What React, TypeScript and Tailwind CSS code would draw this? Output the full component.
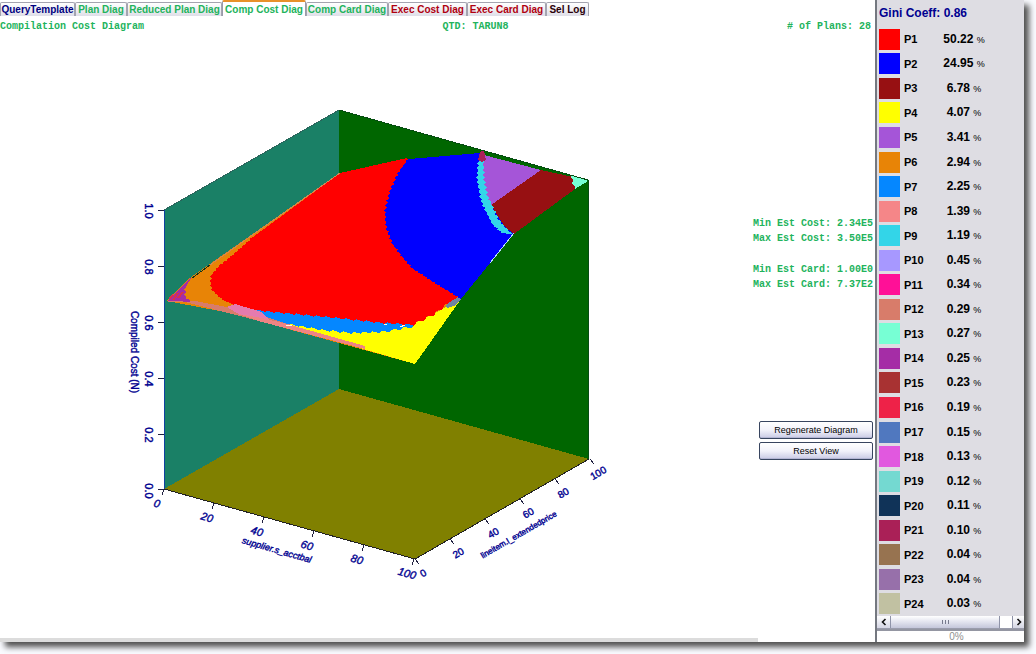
import React from "react";

type Point = [number, number];

const tabs = [
  { label: "QueryTemplate", color: "text-[#000080]", width: "w-[75px]" },
  { label: "Plan Diag", color: "text-[#22b35c]", width: "w-[52px]" },
  { label: "Reduced Plan Diag", color: "text-[#22b35c]", width: "w-[95px]" },
  { label: "Comp Cost Diag", color: "text-[#22b35c]", width: "w-[84px]", active: true },
  { label: "Comp Card Diag", color: "text-[#22b35c]", width: "w-[82px]" },
  { label: "Exec Cost Diag", color: "text-[#b00010]", width: "w-[79px]" },
  { label: "Exec Card Diag", color: "text-[#b00010]", width: "w-[79px]" },
  { label: "Sel Log", color: "text-[#2b0008]", width: "w-[43px]" },
];

const plans = [
  { value: "50.22", color: "bg-[#ff0000]" },
  { value: "24.95", color: "bg-[#0000ff]" },
  { value: "6.78", color: "bg-[#971012]" },
  { value: "4.07", color: "bg-[#ffff00]" },
  { value: "3.41", color: "bg-[#a555d8]" },
  { value: "2.94", color: "bg-[#e88406]" },
  { value: "2.25", color: "bg-[#0587ff]" },
  { value: "1.39", color: "bg-[#f58688]" },
  { value: "1.19", color: "bg-[#33d5e8]" },
  { value: "0.45", color: "bg-[#a798ff]" },
  { value: "0.34", color: "bg-[#ff1097]" },
  { value: "0.29", color: "bg-[#d87c6a]" },
  { value: "0.27", color: "bg-[#77ffd4]" },
  { value: "0.25", color: "bg-[#a52da6]" },
  { value: "0.23", color: "bg-[#a83232]" },
  { value: "0.19", color: "bg-[#ee2248]" },
  { value: "0.15", color: "bg-[#5078bf]" },
  { value: "0.13", color: "bg-[#e158df]" },
  { value: "0.12", color: "bg-[#74d9d1]" },
  { value: "0.11", color: "bg-[#103358]" },
  { value: "0.10", color: "bg-[#aa2057]" },
  { value: "0.04", color: "bg-[#977350]" },
  { value: "0.04", color: "bg-[#9770aa]" },
  { value: "0.03", color: "bg-[#c1c1a2]" },
];

// Splits a curve into short saw-toothed steps, like the cells of a sampled grid.
function jag(points: Point[], dx: number, dy: number, step = 2.5): Point[] {
  const out: Point[] = [];
  let n = 0;
  for (let i = 0; i < points.length - 1; i++) {
    const [x1, y1] = points[i];
    const [x2, y2] = points[i + 1];
    const steps = Math.max(1, Math.round(Math.hypot(x2 - x1, y2 - y1) / step));
    for (let s = 0; s < steps; s++) {
      const sign = n++ % 2 === 0 ? 1 : -1;
      out.push([x1 + ((x2 - x1) * s) / steps + sign * dx, y1 + ((y2 - y1) * s) / steps + sign * dy]);
    }
  }
  out.push(points[points.length - 1]);
  return out;
}

const toPoints = (p: Point[]) => p.map((q) => q.join(",")).join(" ");

const redLeft: Point[] = [[253, 237], [245, 244], [235, 253], [220, 265], [212, 274], [210, 281], [212, 290], [223, 300], [237, 306], [245, 309]];
const redBottom: Point[] = [[245, 309], [283, 313], [337, 318], [383, 323], [413, 325], [433, 315], [450, 302], [460, 298]];
const blueLeft: Point[] = [[408, 159], [398, 173], [390, 191], [385, 210], [386, 227], [392, 243], [403, 258], [413, 269], [430, 280], [443, 288], [461, 299]];
const cyanLeft: Point[] = [[478, 161], [477, 180], [480, 197], [485, 210], [493, 225], [502, 233], [512, 234]];
const cyanRight: Point[] = [[511, 233], [505, 227], [498, 219], [493, 207], [488, 197], [484, 180], [483, 160]];
const skyBottom: Point[] = [[409, 327], [400, 329], [383, 332], [350, 333], [323, 330], [287, 324]];

const regions: { fill: string; points: Point[] }[] = [
  { fill: "#e88406", points: [[167, 301], [187, 280], [321, 186], [340, 173], [407, 158], [461, 299], [415, 364], [230, 313]] },
  { fill: "#a52da6", points: [[167, 301], [191, 278], ...jag([[185, 287], [185, 297], [193, 303]], 1, 0)] },
  { fill: "#d87c6a", points: [[185, 302], [195, 301], [227, 307], [240, 309], [365, 346], [365, 349], [240, 316]] },
  { fill: "#ffff00", points: [[283, 322], [413, 324], [433, 314], [461, 299], [415, 364], [363, 349]] },
  { fill: "#0587ff", points: [[244, 309], [300, 310], [413, 320], [413, 327], ...jag(skyBottom, 1, 1, 5)] },
  { fill: "#ff0000", points: [[340, 173], [407, 158], [461, 299], ...jag([...redBottom].reverse(), 1, 1, 5), ...jag([...redLeft].reverse(), 1, 0), [321, 187]] },
  { fill: "#e57bae", points: [[227, 307], [235, 304], [262, 312], [270, 321], [240, 315]] },
  { fill: "#ee8484", points: [[238, 314], [262, 318], [287, 324], [365, 346], [365, 349], [262, 322]] },
  { fill: "#6f84a4", points: [[446, 305], [450, 302], [458, 297], [461, 299], [456, 305], [447, 308]] },
  { fill: "#0000ff", points: [...jag(blueLeft, 1, 0), [490, 263], [513, 234], [500, 190], [480, 153]] },
  { fill: "#971012", points: [[541, 170], [573, 177], [575, 189], [514, 234], [505, 227], [490, 204]] },
  { fill: "#a555d8", points: [[480, 154], [541, 170], [491, 205], [484, 190]] },
  { fill: "#33d5e8", points: [...jag(cyanLeft, 1, 0), ...jag(cyanRight, 1, 0)] },
  { fill: "#aa2057", points: [[480, 152], [484, 150], [486, 160], [482, 162], [478, 160]] },
  { fill: "#77ffd4", points: [[570, 175], [588, 181], [575, 189], [575, 186], [572, 184], [573, 180]] },
];

const vertical = ["1.0", "0.8", "0.6", "0.4", "0.2", "0.0"];
const horizontal = ["0", "20", "40", "60", "80", "100"];

function CostDiagram() {
  return (
    <svg
      viewBox="0 36 757 602"
      className="min-h-0 min-w-0 flex-1 self-stretch font-['Liberation_Sans_Narrow','Liberation_Sans',sans-serif]"
      role="img"
      aria-label="Compilation cost surface"
    >
      <g shapeRendering="crispEdges">
        <polygon points="164,210 339,110 339,389 164,489" fill="#1a8066" />
        <polygon points="339,110 589,180 589,459 339,389" fill="#006600" />
        <polygon points="164,489 339,389 589,459 415,559" fill="#808000" />
        {regions.map((r, i) => (
          <polygon key={i} points={toPoints(r.points)} fill={r.fill} />
        ))}
        <path d="M169 299l4-4M173 300l5-7M178 298l5-6" stroke="#d9304f" strokeWidth="2" />
        <path d="M168 301h15" stroke="#d87c6a" />
        <path d="M192 278l18-13" stroke="#10331c" />
        <path d="M210 265L340 173" stroke="#d68550" />
        <path d="M490 263L514 233" stroke="#b6dfff" />
        <path d="M286 325h6M384 324h3M400 327l5-2" stroke="#fffce0" />
        <path d="M339 110L588 180V459" stroke="#064c12" fill="none" />
        <path d="M339 110L164 210" stroke="#2b655c" fill="none" />
        <path d="M164 210V489" stroke="#1040a0" />
        <path d="M164 489L415 559L589 459" stroke="#222222" fill="none" />
        {horizontal.map((_, i) => (
          <path
            key={i}
            d={`M158 ${210 + 56 * i - (i === 5 ? 1 : 0)}h6M${164 + 50 * i} ${489 + 14 * i}l-2 6M${415 + 35 * i} ${559 - 20 * i}l4 5`}
            stroke="#202040"
          />
        ))}
      </g>
      <g fill="#000090" stroke="#000090" strokeWidth="0.4" textAnchor="middle" fontSize="11">
        {vertical.map((t, i) => (
          <text key={t} transform={`translate(145 ${211 + 56 * i}) rotate(90)`}>{t}</text>
        ))}
        <g fontStyle="italic">
          {horizontal.map((t, i) => (
            <text key={t} transform={`translate(${156 + 50 * i} ${507 + 14 * i}) rotate(16)`}>{t}</text>
          ))}
          <text transform="translate(276 553) rotate(16)" fontSize="9">supplier.s_acctbal</text>
        </g>
        <text transform="translate(131 352) rotate(90)" fontSize="10">Compiled Cost (N)</text>
        {horizontal.map((t, i) => (
          <text key={t} fontSize="10" transform={`translate(${425 + 35 * i} ${576 - 20 * i}) rotate(-30)`}>{t}</text>
        ))}
        <text fontSize="8" transform="translate(520 537) rotate(-30)">lineitem.l_extendedprice</text>
      </g>
    </svg>
  );
}

const buttonClass =
  "h-[18px] w-full rounded-[2px] border border-[#38455f] bg-linear-to-b from-white via-[#f2f2fa] to-[#c9cae4] text-[9px] leading-[16px] text-black shadow-[inset_0_-1px_0_#b4b6d4]";

export default function App() {
  return (
    <div className="flex min-h-screen bg-[#fafbff] pr-3 pb-3 font-['Liberation_Sans',Arial,sans-serif]">
      <div className="flex min-w-0 flex-1 bg-white shadow-[5px_5px_6px_0_#505050]">
        <main className="flex min-w-0 flex-1 flex-col">
          <nav role="tablist" className="flex h-4 items-end">
            {tabs.map((t) => (
              <button
                key={t.label}
                role="tab"
                aria-selected={!!t.active}
                className={`${t.width} ${t.color} shrink-0 rounded-t-[2px] border-x border-t text-center text-[10px] font-bold whitespace-nowrap ${
                  t.active
                    ? "h-4 border-x-[#9a9aa8] border-t-2 border-t-[#e8912a] bg-white leading-[13px]"
                    : "h-[14px] border-[#a4a4b0] bg-linear-to-b from-white to-[#dfdfe8] leading-[14px]"
                }`}
              >
                {t.label}
              </button>
            ))}
          </nav>
          <header className="grid h-5 grid-cols-3 items-center pr-1 font-['Liberation_Mono',monospace] text-[10px] font-bold text-[#22b35c]">
            <h1>Compilation Cost Diagram</h1>
            <p className="pl-20 text-center">QTD: TARUN8</p>
            <p className="text-right"># of Plans: 28</p>
          </header>
          <div className="flex min-h-0 flex-1">
            <CostDiagram />
            <aside className="flex w-[118px] flex-col items-end pt-[180px] pr-[2px] pb-3">
              <div className="font-['Liberation_Mono',monospace] text-[10px] leading-[15px] font-bold whitespace-nowrap text-[#22b35c]">
                <p>Min Est Cost: 2.34E5</p>
                <p>Max Est Cost: 3.50E5</p>
                <p className="mt-4">Min Est Card: 1.00E0</p>
                <p>Max Est Card: 7.37E2</p>
              </div>
              <div className="mt-[129px] flex w-[114px] flex-col gap-[3px]">
                <button className={buttonClass}>Regenerate Diagram</button>
                <button className={buttonClass}>Reset View</button>
              </div>
            </aside>
          </div>
          <div className="mr-[117px] h-1 bg-[#dcdcdc]" />
        </main>
        <aside className="flex w-[149px] shrink-0 flex-col border-l-2 border-[#747880] bg-[#dedde3]">
          <h2 className="h-[27px] pl-[2px] text-[12px] leading-[26px] font-bold text-[#000090]">Gini Coeff: 0.86</h2>
          <table className="flex flex-1 text-black">
            <tbody className="flex flex-1 flex-col">
              {plans.map((p, i) => (
                <tr key={i} className="flex flex-1 items-center">
                  <td className={`${p.color} ml-[2px] h-[21px] w-[21px]`} />
                  <th scope="row" className="w-[26px] pl-1 text-left text-[11px] leading-4 font-bold">P{i + 1}</th>
                  <td className="w-[76px] text-center text-[12px] leading-4 font-bold">
                    {p.value} <span className="text-[9px] font-normal">%</span>
                  </td>
                </tr>
              ))}
            </tbody>
          </table>
          <div className="flex h-[13px] border-b border-[#9a9cac] bg-white">
            <button aria-label="Scroll left" className="flex w-[14px] items-center justify-center border-r border-[#8f93a8] bg-linear-to-b from-white to-[#d5d6e4]">
              <svg viewBox="0 0 8 8" className="h-2 w-2"><path d="M5.5 1L2.5 4L5.5 7" fill="none" stroke="#111" strokeWidth="1.6" /></svg>
            </button>
            <div className="flex flex-1 items-center justify-center gap-[2px] border-r border-[#8f93a8] bg-linear-to-b from-white via-[#e2e3ee] to-[#c4c6da]">
              <span className="h-1 w-px bg-[#777a8c]" />
              <span className="h-1 w-px bg-[#777a8c]" />
              <span className="h-1 w-px bg-[#777a8c]" />
            </div>
            <div className="w-3" />
            <button aria-label="Scroll right" className="flex w-3 items-center justify-center border-l border-[#8f93a8] bg-linear-to-b from-white to-[#d5d6e4]">
              <svg viewBox="0 0 8 8" className="h-2 w-2"><path d="M2.5 1L5.5 4L2.5 7" fill="none" stroke="#111" strokeWidth="1.6" /></svg>
            </button>
          </div>
          <div role="progressbar" aria-label="Progress" aria-valuenow={0} className="h-[13px] border-t-2 border-[#9496a2] bg-white pl-3 text-center text-[10px] leading-[11px] text-[#909090]">
            0%
          </div>
        </aside>
      </div>
    </div>
  );
}
